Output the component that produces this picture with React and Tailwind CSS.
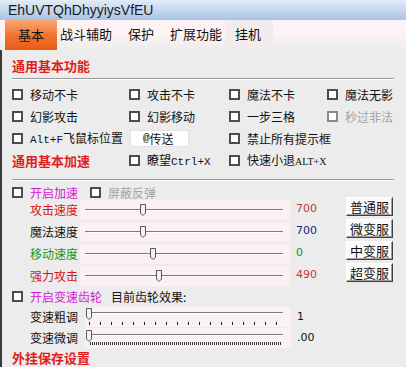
import React from "react";

const cjk = "font-['Noto_Sans_CJK_SC',sans-serif]";
const mono = "font-['Liberation_Mono','Noto_Sans_CJK_SC',monospace]";

function Check({ label, className = "", disabled = false }) {
  return (
    <div className={`flex items-center gap-[7px] ${className}`}>
      <span
        className={`w-[11px] h-[11px] border-2 bg-white shrink-0 ${
          disabled ? "border-[#8a8a8a]" : "border-[#4d4d4d]"
        }`}
      />
      <span className={`text-[12px] leading-none whitespace-nowrap ${disabled ? "text-[#a3a3a3]" : ""}`}>
        {label}
      </span>
    </div>
  );
}

function Thumb({ left, top }) {
  return (
    <svg
      width="6"
      height="12"
      viewBox="0 0 6 12"
      className="absolute"
      style={{ left: left, top: top }}
    >
      <path d="M0.5 0.5 H5.5 V9 L3 11.5 L0.5 9 Z" fill="#f4f4f4" stroke="#555" strokeWidth="1" />
    </svg>
  );
}

function SpeedRow({ label, labelColor, pos, value, valueColor }) {
  return (
    <div className="h-[22px] flex items-center pl-[18px]">
      <span className={`w-[50px] text-[12px] leading-none ${labelColor}`}>{label}</span>
      <div className="relative w-[210px] h-[20px] bg-[#fcf0f2]">
        <div className="absolute left-[5px] right-[7px] top-[9px] h-[2px] border-t border-[#7a7a7a] border-b border-b-white" />
        <Thumb left={pos - 3} top={4} />
      </div>
      <span className={`ml-[6px] text-[11px] font-['DejaVu_Sans',sans-serif] ${valueColor}`}>{value}</span>
    </div>
  );
}

function ServerButton({ label }) {
  return (
    <button className="w-[47px] h-[19px] flex items-center justify-center bg-[#fafafa] border border-t-white border-l-white border-r-[#404040] border-b-[#404040] shadow-[inset_-1px_-1px_0_#a0a0a0] text-[13px] leading-none">
      {label}
    </button>
  );
}

const coarseTicks = Array.from({ length: 18 }, (_, i) => i);
const fineTicks = Array.from({ length: 96 }, (_, i) => i);

export default function App() {
  return (
    <div className={`w-[406px] h-[367px] overflow-hidden bg-[#ececec] text-[#111] ${cjk}`}>
      {/* title bar */}
      <div className="h-[20px] flex items-center pl-[8px] bg-gradient-to-b from-[#e3ecf7] to-[#a9c3e4]">
        <span className="text-[14px] font-['Liberation_Sans',sans-serif] text-[#1b1b1b]">EhUVTQhDhyyiysVfEU</span>
      </div>

      {/* tabs */}
      <div className="h-[30px] flex items-stretch bg-gradient-to-b from-[#fdf2f4] via-[#fdf2f4] to-[#ececec] pl-[5px] text-[13px]">
        <div className="w-[52px] flex items-center justify-center bg-gradient-to-b from-[#f7a775] via-[#f2742f] to-[#e95c12]">
          基本
        </div>
        <div className="ml-[3px] h-[28px] flex items-center">战斗辅助</div>
        <div className="ml-[16px] h-[28px] flex items-center">保护</div>
        <div className="ml-[16px] h-[28px] flex items-center">扩展功能</div>
        <div className="ml-[3px] w-[48px] h-[28px] flex items-center pl-[10px] bg-[#f2eced]">挂机</div>
      </div>

      {/* content */}
      <div className="h-[317px] border-l-2 border-[#3a3a3a] pl-[10px] pt-[5px] flex flex-col">
        <div className="h-[22px] flex items-center text-[13px] font-bold text-[#e01e1e]">通用基本功能</div>
        <div className="h-[7px] pt-[1px]">
          <div className="w-[382px] h-[2px] border-t border-[#9a9a9a] border-b border-b-white" />
        </div>

        <div className="grid grid-cols-[117px_100px_98px_1fr] auto-rows-[22px] items-center">
          <Check label="移动不卡" />
          <Check label="攻击不卡" />
          <Check label="魔法不卡" />
          <Check label="魔法无影" />

          <Check label="幻影攻击" />
          <Check label="幻影移动" />
          <Check label="一步三格" />
          <Check label="秒过非法" disabled />

          <div className="flex items-center gap-[7px]">
            <span className="w-[11px] h-[11px] border-2 border-[#4d4d4d] bg-white shrink-0" />
            <span className="text-[12px] leading-none whitespace-nowrap">
              <span className={`${mono} text-[11px]`}>Alt+F</span>飞鼠标位置
            </span>
          </div>
          <div className="w-[59px] h-[17px] bg-white border border-[#e2e2e2] flex items-center pl-[12px] text-[12px] leading-none ml-[1px]">
            <span className={`${mono} text-[11px]`}>@</span>传送
          </div>
          <div className="col-span-2 flex items-center gap-[7px]">
            <span className="w-[11px] h-[11px] border-2 border-[#4d4d4d] bg-white shrink-0" />
            <span className="text-[12px] leading-none">禁止所有提示框</span>
          </div>

          <div className="text-[13px] font-bold text-[#e01e1e]">通用基本加速</div>
          <div className="flex items-center gap-[7px]">
            <span className="w-[11px] h-[11px] border-2 border-[#4d4d4d] bg-white shrink-0" />
            <span className="text-[12px] leading-none whitespace-nowrap">
              瞭望<span className={`${mono} text-[11px]`}>Ctrl+X</span>
            </span>
          </div>
          <div className="col-span-2 flex items-center gap-[7px]">
            <span className="w-[11px] h-[11px] border-2 border-[#4d4d4d] bg-white shrink-0" />
            <span className="text-[12px] leading-none whitespace-nowrap">
              快速小退<span className="font-['Liberation_Serif',serif] text-[10px]">ALT+X</span>
            </span>
          </div>
        </div>

        <div className="h-[15px] pt-[7px]">
          <div className="w-[382px] h-[2px] border-t border-[#9a9a9a] border-b border-b-white" />
        </div>

        {/* speed block */}
        <div className="flex">
          <div className="w-[334px] flex flex-col">
            <div className="h-[12px] flex items-center gap-[12px]">
              <div className="flex items-center gap-[7px]">
                <span className="w-[11px] h-[11px] border-2 border-[#4d4d4d] bg-white shrink-0" />
                <span className="text-[12px] leading-none text-[#d21bd2]">开启加速</span>
              </div>
              <div className="flex items-center gap-[7px]">
                <span className="w-[11px] h-[11px] border-2 border-[#4d4d4d] bg-white shrink-0" />
                <span className="text-[12px] leading-none text-[#a3a3a3]">屏蔽反弹</span>
              </div>
            </div>
            <SpeedRow label="攻击速度" labelColor="text-[#d61515]" pos={63} value="700" valueColor="text-[#c0393b]" />
            <SpeedRow label="魔法速度" labelColor="text-[#111]" pos={63} value="700" valueColor="text-[#1c1c8a]" />
            <SpeedRow label="移动速度" labelColor="text-[#159615]" pos={73} value="0" valueColor="text-[#1f8a1f]" />
            <SpeedRow label="强力攻击" labelColor="text-[#d61515]" pos={79} value="490" valueColor="text-[#c0393b]" />
          </div>
          <div className="flex flex-col gap-[3px] pt-[10px]">
            <ServerButton label="普通服" />
            <ServerButton label="微变服" />
            <ServerButton label="中变服" />
            <ServerButton label="超变服" />
          </div>
        </div>

        {/* gear */}
        <div className="h-[20px] flex items-center gap-[9px]">
          <div className="flex items-center gap-[7px]">
            <span className="w-[11px] h-[11px] border-2 border-[#4d4d4d] bg-white shrink-0" />
            <span className="text-[12px] leading-none text-[#d21bd2]">开启变速齿轮</span>
          </div>
          <span className="text-[12px] leading-none">目前齿轮效果:</span>
        </div>

        <div className="h-[21px] flex items-center pl-[18px]">
          <span className="w-[55px] text-[12px] leading-none">变速粗调</span>
          <div className="relative w-[206px] h-[20px] bg-[#f9f1f3]">
            <div className="absolute left-[5px] right-[8px] top-[5px] h-[2px] border-t border-[#7a7a7a] border-b border-b-white" />
            <Thumb left={1} top={1} />
            <div className="absolute left-[4px] top-[15px] flex gap-[10px]">
              {coarseTicks.map((i) => (
                <span key={i} className="w-[1px] h-[3px] bg-[#222]" />
              ))}
            </div>
          </div>
          <span className="ml-[6px] text-[11px] font-['DejaVu_Sans',sans-serif]">1</span>
        </div>

        <div className="h-[22px] flex items-center pl-[18px]">
          <span className="w-[55px] text-[12px] leading-none">变速微调</span>
          <div className="relative w-[206px] h-[20px] bg-[#f9f1f3]">
            <div className="absolute left-[5px] right-[8px] top-[6px] h-[2px] border-t border-[#7a7a7a] border-b border-b-white" />
            <Thumb left={1} top={2} />
            <div className="absolute left-[5px] top-[14px] flex gap-[1px]">
              {fineTicks.map((i) => (
                <span key={i} className="w-[1px] h-[3px] bg-[#333]" />
              ))}
            </div>
          </div>
          <span className="ml-[6px] text-[11px] font-['DejaVu_Sans',sans-serif]">.00</span>
        </div>

        <div className="h-[18px] flex items-center text-[13px] font-bold text-[#e01e1e]">外挂保存设置</div>
      </div>
    </div>
  );
}
